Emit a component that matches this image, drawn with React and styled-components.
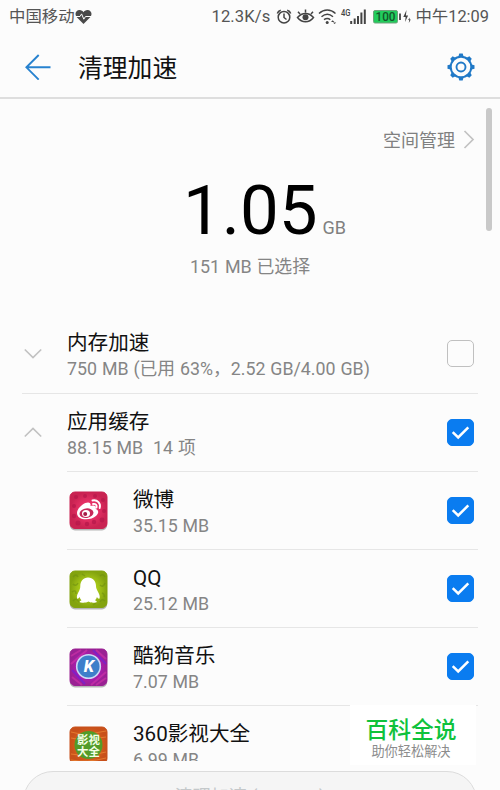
import React from 'react'
import styled, { createGlobalStyle } from 'styled-components'

const GlobalStyle = createGlobalStyle`
  * {
    box-sizing: border-box;
  }
  body {
    margin: 0;
    background: #fcfcfc;
    font-family: Roboto, "Noto Sans CJK SC", sans-serif;
  }
  svg {
    display: block;
    flex: none;
  }
`

// Styled Components
const Screen = styled.div`
  position: relative;
  display: flex;
  flex-direction: column;
  width: 500px;
  height: 790px;
  overflow: hidden;
  background: #fcfcfc;
`
const StatusBar = styled.div`
  display: flex;
  flex: none;
  align-items: center;
  justify-content: space-between;
  height: 34px;
  padding: 0 11px 0 9px;
  color: #555;
  font-size: 16.4px;
  line-height: 34px;
  white-space: nowrap;
`
const StatusGroup = styled.div`
  display: flex;
  align-items: center;
`
const Speed = styled.span`
  font-size: 16.6px;
  letter-spacing: 0.1px;
  margin-right: 2px;
`
const Toolbar = styled.header`
  display: flex;
  flex: none;
  align-items: center;
  height: 65px;
  padding: 2px 25px 0;
  border-bottom: 2px solid #dedede;
`
const Title = styled.h1`
  flex: 1;
  margin: 4px 0 0 27px;
  color: #111;
  font-size: 24.8px;
  font-weight: 400;
  line-height: 36px;
`
const Content = styled.main`
  flex: none;
  height: 662px;
  overflow: hidden;
`
const SpaceLink = styled.div`
  display: flex;
  align-items: center;
  justify-content: flex-end;
  height: 24px;
  margin-top: 28px;
  padding-right: 25px;
  gap: 8px;
  color: #808080;
  font-size: 18px;
`
const Total = styled.div`
  display: flex;
  align-items: baseline;
  height: 84px;
  margin-top: 18px;
  padding-left: 183px;
  color: #000;
  font-size: 69px;
  line-height: 84px;
`
const Unit = styled.span`
  margin-left: 5px;
  color: #808080;
  font-size: 18px;
  line-height: 20px;
`
const Selected = styled.div`
  height: 24px;
  margin: 2px 0 35.4px 190px;
  color: #858585;
  font-size: 17.9px;
  line-height: 24px;
  word-spacing: 0.3px;
  white-space: pre;
`
const Row = styled.div`
  display: flex;
  align-items: center;
  height: 78.2px;
  margin-left: ${props => (props.$nested ? '67px' : '22px')};
  margin-right: 22px;
  padding-right: 4px;
  border-top: 1px solid #e6e6e6;
  &:first-child {
    border-top-color: transparent;
  }
`
const Lead = styled.div`
  display: flex;
  width: ${props => (props.$nested ? '66px' : '45px')};
  padding-left: 2px;
  padding-top: ${props => (props.$nested ? '2px' : '0')};
`
const Labels = styled.div`
  flex: 1;
  padding-top: 5px;
  white-space: pre;
`
const Name = styled.div`
  height: 26px;
  color: #111;
  font-size: 20.6px;
  line-height: 26px;
`
const Size = styled.div`
  height: 26px;
  color: #858585;
  font-size: 17.8px;
  line-height: 26px;
  word-spacing: 0.5px;
`
const Checkbox = styled.div`
  display: flex;
  align-items: center;
  justify-content: center;
  width: 27px;
  height: 27px;
  border: 1px solid ${props => (props.$checked ? '#0a7cf0' : '#c0c0c0')};
  border-radius: 5px;
  background: ${props => (props.$checked ? '#0a7cf0' : 'transparent')};
`
const CleanButton = styled.div`
  flex: none;
  height: 60px;
  margin: 10px 23px 0;
  border: 1px solid #dcdcdc;
  border-radius: 30px;
  background: #f5f5f5;
  color: #c4c8ca;
  font-size: 18px;
  line-height: 49px;
  text-align: center;
`
const ScrollThumb = styled.div`
  position: absolute;
  top: 108px;
  right: 8px;
  width: 6px;
  height: 123px;
  border-radius: 3px;
  background: #c9c9c9;
`
const Badge = styled.div`
  position: absolute;
  top: 705px;
  left: 350px;
  width: 126px;
  height: 60px;
  padding: 12px 4px 0 0;
  background: #fff;
  text-align: center;
`
const BadgeName = styled.div`
  color: #0fc23c;
  font-size: 22.8px;
  font-weight: 500;
  line-height: 28px;
`
const BadgeText = styled.div`
  color: #8c8c8c;
  font-size: 13.2px;
  line-height: 14px;
`

const HeartIcon = () => (
  <svg width="17" height="16" viewBox="0 0 17 16">
    <path d="M8.5 15 1.8 8.2C-1 5 1 1 4.5 1c2 0 3.2 1 4 2.2C9.3 2 10.5 1 12.5 1 16 1 18 5 15.2 8.2z" fill="#4a4a4a" />
    <path d="M1 7.5h4l1.6-2.6 2.2 5.3 1.7-2.7H16" fill="none" stroke="#fcfcfc" strokeWidth="1" />
  </svg>
)

const StatusIcons = () => (
  <svg width="143" height="22" viewBox="270 6 143 22" fill="none" stroke="#444" strokeWidth="1.5">
    <circle cx="282" cy="17.2" r="5.8" />
    <path d="M282 13.5v4l2.5 2M275.3 13.5a5 5 0 0 1 3.5-3.3M288.7 13.5a5 5 0 0 0-3.5-3.3" />
    <path d="M295.5 17.5c4.5-5.500 11.500-5.500 16 0-4.500 5.800-11.500 5.800-16 0zM298 14l-2-2.200M303.500 12.500V9.600M309 14l2-2.200" />
    <circle cx="303.5" cy="17.3" r="3" fill="#444" stroke="none" />
    <path d="M317 13.500c5-4.700 11.500-4.700 16.500 0M319.500 16.700c3.800-3.300 7.800-3.300 11.500 0M322 19.700c2.300-1.700 4.300-1.700 6.300 0" />
    <circle cx="325.2" cy="22.5" r="1.5" fill="#444" stroke="none" />
    <path d="M329 22l1.700-1.700 1.700 1.700zM331 22.500h3.200l-1.600 1.600z" fill="#444" stroke="none" />
    <text x="339" y="16" fill="#444" stroke="none" fontSize="9" fontWeight="500" textLength="9.5" lengthAdjust="spacingAndGlyphs">4G</text>
    <path d="M349.200 24v-3M352.700 24v-5.500M356 24v-8M359.400 24V12.500M362.800 24V9.500" strokeWidth="2" />
    <rect x="371.5" y="10.5" width="24" height="12.5" rx="1.5" fill="#22cc5c" stroke="#6fa37c" strokeWidth="1" />
    <text x="373.5" y="21.2" fill="#14552a" stroke="none" fontSize="12" fontWeight="500" textLength="20" lengthAdjust="spacingAndGlyphs">100</text>
    <path d="M398 13.500v6.500" strokeWidth="1.8" />
    <path d="M404.500 10l-3.200 7h2.300l-.5 5 3-6.500h-2.200zM407.500 17.500l-1.300 2.600h1l-.4 3 2-3.600h-1.100z" fill="#444" stroke="none" />
  </svg>
)

const BackIcon = () => (
  <svg width="26" height="26" viewBox="0 0 26 26" fill="none" stroke="#2782cf" strokeWidth="1.9">
    <path d="M25.500 13.300H1.500M13.700 1 1.400 13.300l12.300 12.300" />
  </svg>
)

const GearIcon = () => (
  <svg width="28" height="28" viewBox="-14 -14 28 28" fill="none" stroke="#2079c7">
    <circle r="10.3" strokeWidth="2" />
    <circle r="4.5" strokeWidth="1.9" />
    {[0, 45, 90, 135, 180, 225, 270, 315].map(angle => (
      <path key={angle} d="M-2.600-10.600-1.700-13.500H1.700L2.600-10.600z" fill="#2079c7" stroke="none" transform={`rotate(${angle})`} />
    ))}
  </svg>
)

const Chevron = ({ d, width = 18, height = 11 }) => (
  <svg width={width} height={height} fill="none" stroke="#c2c2c2" strokeWidth="1.7">
    <path d={d} />
  </svg>
)

const CheckMark = () => (
  <svg width="19" height="15" viewBox="0 0 19 15" fill="none" stroke="#fff" strokeWidth="2.5">
    <path d="M1.700 7.200 7.200 12.500 17.300 2.400" />
  </svg>
)

const AppTile = ({ id, from, to, children }) => (
  <svg width="39" height="40" viewBox="0 0 39 40">
    <defs>
      <radialGradient id={id}>
        <stop offset="0.3" stopColor={from} />
        <stop offset="1" stopColor={to} />
      </radialGradient>
    </defs>
    <rect x="1" y="2" width="37" height="37.5" rx="5" fill="#b5b5b5" />
    <rect x="1" y="1" width="37" height="36.5" rx="5" fill={`url(#${id})`} stroke={to} />
    {children}
  </svg>
)

const WeiboIcon = () => (
  <AppTile id="weibo" from="#ee356b" to="#c92352">
    <g fill="#b5174a" opacity="0.7">
      <circle cx="7" cy="6" r="2" />
      <circle cx="16" cy="5" r="2" />
      <circle cx="26" cy="5" r="2" />
      <circle cx="34" cy="9" r="2" />
      <circle cx="5" cy="15" r="2" />
      <circle cx="35" cy="20" r="2" />
      <circle cx="5" cy="25" r="2.2" />
      <circle cx="9" cy="32" r="2.5" />
      <circle cx="18" cy="33" r="2.2" />
      <circle cx="25" cy="31" r="2.2" />
      <circle cx="33" cy="29" r="2.4" />
    </g>
    <path d="M8 22c0-5 7-10.500 11-10.500 2.500 0 3 1.800 2.400 3.600 3.400-1.300 6.400-.4 5.300 3 3.200 1 3.300 4 .5 6.600-5.200 5-19.200 5.300-19.200-2.700z" fill="#fff" />
    <ellipse cx="17.5" cy="22.2" rx="7" ry="4.8" fill="#c72a5a" transform="rotate(-8 17.5 22.2)" />
    <ellipse cx="17" cy="22.5" rx="4" ry="3.5" fill="#fff" />
    <circle cx="16.2" cy="23" r="2" fill="#a51c47" />
    <path d="M23.500 9.500c5-1 8.500 3 7.200 7.500M24 13c2.600-.6 4.200 1.200 3.500 3.500" fill="none" stroke="#fff" strokeWidth="1.9" strokeLinecap="round" />
  </AppTile>
)

const QQIcon = () => (
  <AppTile id="qq" from="#b5d61c" to="#83a30f">
    <g fill="none" stroke="#6f9110" strokeWidth="1.5" opacity="0.6">
      <path d="M4 7q3-4 5 0M4 14q3 3 5-1M3 22q4-3 4 2M4 31q3-4 6 1M31 6q3-3 5 1M31 15q3 3 5-2M33 23q3 1 2 4M31 32q2-4 5-1M13 4l3 2M24 35l3-2" />
    </g>
    <path d="M19 7.500c5 0 8 3.700 8 8.500 0 2 .5 2.700 1.300 4.500 2 3.500 3 6 2.200 8-.8 1-2-.7-2.600-1.500-.3 1.500-.9 2.400-1.900 3.300 2.300.8 2.300 2 .6 2.300-2.600.4-5.200.2-7.100-1-1.900 1.200-5 1.400-7.600 1-1.800-.3-1.700-1.500.6-2.300-1-1-1.500-1.800-1.900-3.300-.6.900-1.800 2.400-2.500 1.500-.8-2 .3-4.500 2.200-8 .7-1.800 1-2.500 1-4.500 0-4.800 3-8.500 7.700-8.500z" fill="#fff" />
  </AppTile>
)

const KugouIcon = () => (
  <AppTile id="kugou" from="#b918c8" to="#9a2193">
    <path d="M2 8 12 2M2 16 18 2M22 37 37 24M27 37l10-7M3 29l10 8M27 2l10 9" stroke="#df37b0" strokeWidth="2" opacity="0.5" />
    <path d="M3 22 16 36M24 2l13 14" stroke="#6d20df" strokeWidth="2" opacity="0.6" />
    <circle cx="19.5" cy="18.5" r="11.8" fill="#3d7fca" stroke="#cbd9f5" strokeWidth="1.6" />
    <text x="19.9" y="24.2" fill="#fff" textAnchor="middle" fontSize="16.5" fontWeight="800" fontStyle="italic">K</text>
  </AppTile>
)

const VideoIcon = () => (
  <AppTile id="video" from="#de6d1f" to="#c8501a">
    <path d="M2 6q12 4 35-1M2 12q10 3 35-1M2 28q15 3 35-2M2 34q16 3 35-2" fill="none" stroke="#ef8a37" opacity="0.7" />
    <circle cx="19.5" cy="19" r="14" fill="#539b28" />
    <text x="19.5" y="18" fill="#f5ffe5" textAnchor="middle" fontSize="11.4" fontWeight="700">影视</text>
    <text x="19.5" y="29.5" fill="#f5ffe5" textAnchor="middle" fontSize="11.4" fontWeight="700">大全</text>
  </AppTile>
)

const items = [
  { name: '内存加速', size: '750 MB (已用 63%，2.52 GB/4.00 GB)', icon: <Chevron d="M.8 1.500 9 9.500 17.200 1.500" /> },
  { name: '应用缓存', size: '88.15 MB  14 项', icon: <Chevron d="M.8 9.500 9 1.500 17.200 9.500" />, checked: true },
  { name: '微博', size: '35.15 MB', icon: <WeiboIcon />, checked: true, nested: true },
  { name: 'QQ', size: '25.12 MB', icon: <QQIcon />, checked: true, nested: true },
  { name: '酷狗音乐', size: '7.07 MB', icon: <KugouIcon />, checked: true, nested: true },
  { name: '360影视大全', size: '6.99 MB', icon: <VideoIcon />, checked: true, nested: true }
]

const CacheRow = ({ item }) => (
  <Row $nested={item.nested}>
    <Lead $nested={item.nested}>{item.icon}</Lead>
    <Labels>
      <Name>{item.name}</Name>
      <Size>{item.size}</Size>
    </Labels>
    <Checkbox $checked={item.checked}>{item.checked && <CheckMark />}</Checkbox>
  </Row>
)

const App = () => {
  return (
    <Screen>
      <GlobalStyle />
      <StatusBar>
        <StatusGroup>
          <span>中国移动</span>
          <HeartIcon />
        </StatusGroup>
        <StatusGroup>
          <Speed>12.3K/s</Speed>
          <StatusIcons />
          <span>中午12:09</span>
        </StatusGroup>
      </StatusBar>
      <Toolbar>
        <BackIcon />
        <Title>清理加速</Title>
        <GearIcon />
      </Toolbar>
      <Content>
        <SpaceLink>
          空间管理
          <Chevron d="M1.500 1 10 9.500 1.500 18" width={12} height={19} />
        </SpaceLink>
        <Total>
          1.05<Unit>GB</Unit>
        </Total>
        <Selected>151 MB 已选择</Selected>
        <div>
          {items.map(item => (
            <CacheRow key={item.name} item={item} />
          ))}
        </div>
      </Content>
      <CleanButton>清理加速 (151 MB)</CleanButton>
      <ScrollThumb />
      <Badge>
        <BadgeName>百科全说</BadgeName>
        <BadgeText>助你轻松解决</BadgeText>
      </Badge>
    </Screen>
  )
}
export default App
